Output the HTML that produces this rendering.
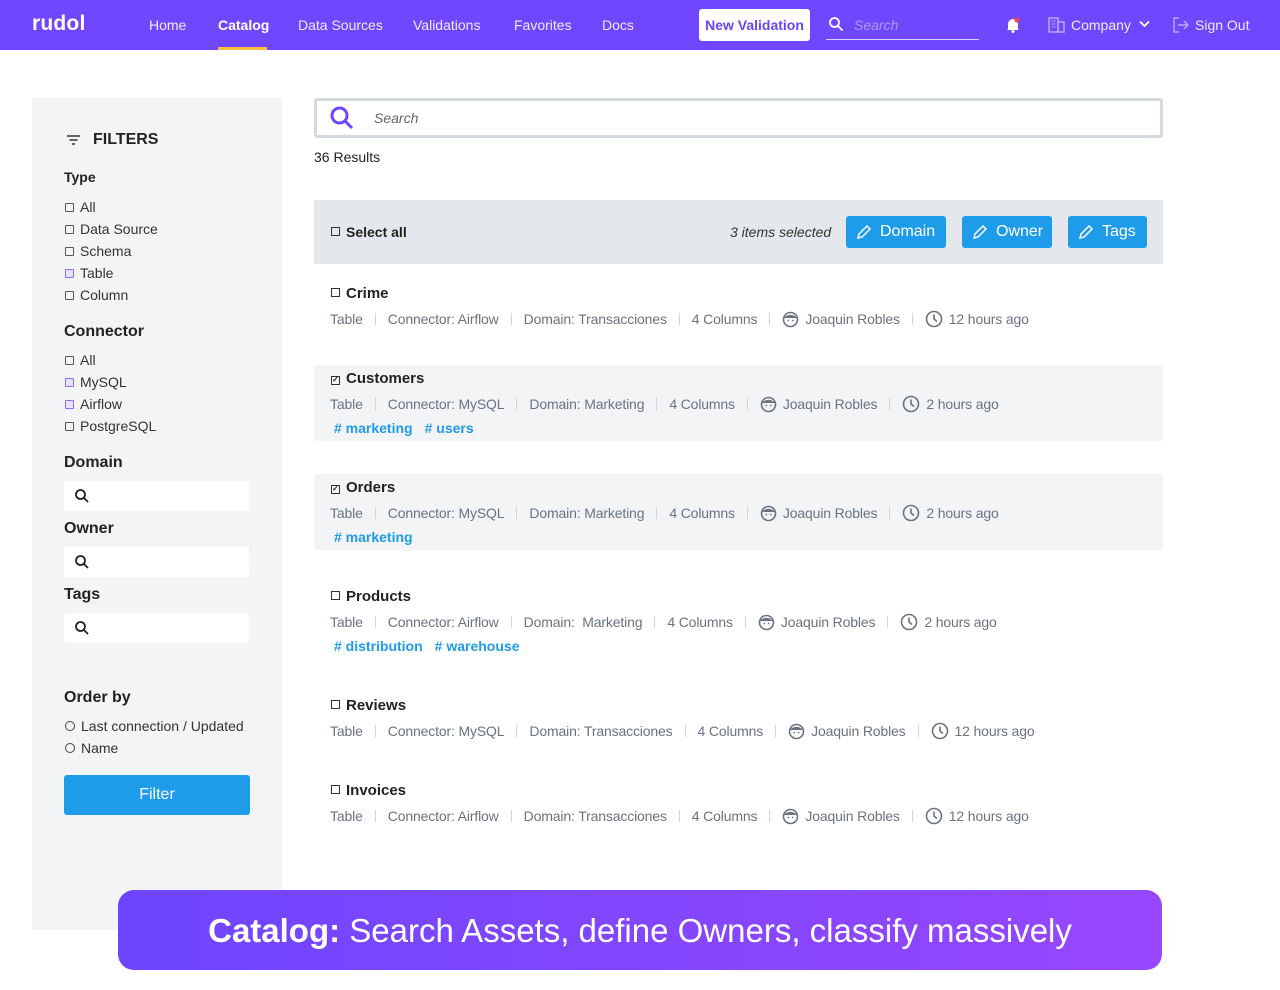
<!DOCTYPE html>
<html><head><meta charset="utf-8"><style>
*{margin:0;padding:0;box-sizing:border-box}
body{width:1280px;height:990px;position:relative;background:#fff;font-family:"Liberation Sans",sans-serif;color:#1f2328;overflow:hidden}
.nav{position:absolute;left:0;top:0;width:1280px;height:50px;background:#7047fe;color:#fff}
.nav span{position:absolute;top:17px;font-size:14px;color:#ecebff}
.a{position:absolute}
.side{position:absolute;left:32px;top:98px;width:250px;height:832px;background:#f3f4f6}
.h{position:absolute;font-weight:bold;font-size:15px;color:#222}
.cb{position:absolute;font-size:14px;color:#333;white-space:nowrap}
.cb i{display:inline-block;width:9px;height:9px;border:1.5px solid #555;border-radius:1px;margin-right:6px;vertical-align:0px}
.cb i.on{border-color:#8b6cf8;background:#e8e1ff;position:relative}
.cb b.r{display:inline-block;width:10px;height:10px;border:1.5px solid #444;border-radius:50%;margin-right:6px;vertical-align:0}
.inp{position:absolute;left:64px;width:185px;height:30px;background:#fff;border-radius:3px}
.inp svg{position:absolute;left:10px;top:7px}
.row{position:absolute;left:314px;width:849px;border-radius:3px}
.row.g{background:#f3f4f6}
.t{position:absolute;left:17px;font-weight:bold;font-size:15px;color:#222}
.t i{display:inline-block;width:9px;height:9px;border:1.5px solid #333;margin-right:6px;vertical-align:1px;font-style:normal}
.m{position:absolute;left:16px;font-size:14px;color:#6b7280;white-space:nowrap;display:flex;align-items:center;letter-spacing:-0.15px}
.m s{text-decoration:none;display:inline-block;width:1px;height:12px;background:#d1d5db;margin:0 12px}
.m svg{margin-right:6px}
.tg{position:absolute;left:20px;font-size:14px;font-weight:bold;color:#1e9be9}
.tg span{margin-right:12px}
.btn{position:absolute;top:216px;height:32px;background:#1e9be9;color:#fff;font-size:16px;border-radius:3px;display:flex;align-items:center;padding-left:10px}
.btn svg{margin-right:8px}
</style></head><body>
<div class="nav">
<div class="a" style="left:32px;top:12px;font-size:21px;font-weight:bold;color:#fff;letter-spacing:.2px">rudol</div>
<span style="left:149px">Home</span>
<span style="left:218px;font-weight:bold;color:#fff">Catalog</span>
<div class="a" style="left:218px;top:47px;width:49px;height:3px;background:#fbbf3c"></div>
<span style="left:298px">Data Sources</span>
<span style="left:413px">Validations</span>
<span style="left:514px">Favorites</span>
<span style="left:602px">Docs</span>
<div class="a" style="left:699px;top:9px;width:111px;height:32px;background:#fff;border-radius:3px;color:#6a45f0;font-weight:bold;font-size:14px;text-align:center;line-height:32px">New Validation</div>
<svg class="a" style="left:828px;top:16px" width="16" height="16" viewBox="0 0 16 16"><circle cx="6.5" cy="6.5" r="4.5" fill="none" stroke="#fff" stroke-width="1.8"/><path d="M10 10l4.5 4.5" stroke="#fff" stroke-width="1.8"/></svg>
<span style="left:854px;font-style:italic;color:#a99af0">Search</span>
<div class="a" style="left:826px;top:39px;width:153px;height:1px;background:#d8d2ff"></div>
<svg class="a" style="left:1004px;top:16px" width="18" height="18" viewBox="0 0 18 18"><path d="M4 13V8a5 5 0 0 1 10 0v5l1 1H3z" fill="#fff"/><circle cx="9" cy="15.5" r="1.5" fill="#fff"/><circle cx="13" cy="4" r="2.5" fill="#f04444"/></svg>
<svg class="a" style="left:1048px;top:17px" width="17" height="16" viewBox="0 0 17 16"><rect x="1" y="1" width="9" height="14" fill="none" stroke="#b7a9ff" stroke-width="1.5"/><rect x="10" y="5" width="6" height="10" fill="none" stroke="#b7a9ff" stroke-width="1.5"/><path d="M3.5 4h4M3.5 7h4M3.5 10h4" stroke="#b7a9ff"/></svg>
<span style="left:1071px">Company</span>
<svg class="a" style="left:1139px;top:20px" width="11" height="8" viewBox="0 0 11 8"><path d="M1 1.5l4.5 4.5 4.5-4.5" fill="none" stroke="#fff" stroke-width="1.8"/></svg>
<svg class="a" style="left:1172px;top:16px" width="18" height="18" viewBox="0 0 18 18"><path d="M7 2H2v14h5" fill="none" stroke="#b7a9ff" stroke-width="1.5"/><path d="M6 9h10M12 5l4 4-4 4" fill="none" stroke="#b7a9ff" stroke-width="1.5"/></svg>
<span style="left:1195px">Sign Out</span>
</div>

<div class="side"></div>
<svg class="a" style="left:66px;top:134px" width="15" height="12" viewBox="0 0 15 12"><path d="M1 2h13M3.5 6h8M6 10h3" stroke="#333" stroke-width="1.6"/></svg>
<div class="h" style="left:93px;top:131px;font-size:16px">FILTERS</div>
<div class="h" style="left:64px;top:169px;font-size:14px">Type</div>
<div class="cb" style="left:65px;top:199px"><i></i>All</div>
<div class="cb" style="left:65px;top:221px"><i></i>Data Source</div>
<div class="cb" style="left:65px;top:243px"><i></i>Schema</div>
<div class="cb" style="left:65px;top:265px"><i class="on"></i>Table</div>
<div class="cb" style="left:65px;top:287px"><i></i>Column</div>
<div class="h" style="left:64px;top:323px;font-size:16px">Connector</div>
<div class="cb" style="left:65px;top:352px"><i></i>All</div>
<div class="cb" style="left:65px;top:374px"><i class="on"></i>MySQL</div>
<div class="cb" style="left:65px;top:396px"><i class="on"></i>Airflow</div>
<div class="cb" style="left:65px;top:418px"><i></i>PostgreSQL</div>
<div class="h" style="left:64px;top:454px;font-size:16px">Domain</div>
<div class="inp" style="top:481px"><svg width="16" height="16" viewBox="0 0 16 16"><circle cx="6.5" cy="6.5" r="4.5" fill="none" stroke="#222" stroke-width="1.8"/><path d="M10 10l4 4" stroke="#222" stroke-width="1.8"/></svg></div>
<div class="h" style="left:64px;top:520px;font-size:16px">Owner</div>
<div class="inp" style="top:547px"><svg width="16" height="16" viewBox="0 0 16 16"><circle cx="6.5" cy="6.5" r="4.5" fill="none" stroke="#222" stroke-width="1.8"/><path d="M10 10l4 4" stroke="#222" stroke-width="1.8"/></svg></div>
<div class="h" style="left:64px;top:586px;font-size:16px">Tags</div>
<div class="inp" style="top:613px"><svg width="16" height="16" viewBox="0 0 16 16"><circle cx="6.5" cy="6.5" r="4.5" fill="none" stroke="#222" stroke-width="1.8"/><path d="M10 10l4 4" stroke="#222" stroke-width="1.8"/></svg></div>
<div class="h" style="left:64px;top:689px;font-size:16px">Order by</div>
<div class="cb" style="left:65px;top:718px"><b class="r"></b>Last connection / Updated</div>
<div class="cb" style="left:65px;top:740px"><b class="r"></b>Name</div>
<div class="a" style="left:64px;top:775px;width:186px;height:40px;background:#1e9be9;border-radius:3px;color:#fff;font-size:16px;text-align:center;line-height:40px">Filter</div>

<div class="a" style="left:314px;top:98px;width:849px;height:40px;border:3px solid #d5d9e0;border-radius:3px"></div>
<svg class="a" style="left:329px;top:105px" width="26" height="26" viewBox="0 0 26 26"><circle cx="10.5" cy="10.5" r="7.5" fill="none" stroke="#7047fe" stroke-width="3"/><path d="M16 16l7 7" stroke="#7047fe" stroke-width="3"/></svg>
<div class="a" style="left:374px;top:110px;font-size:14px;font-style:italic;color:#666">Search</div>
<div class="a" style="left:314px;top:149px;font-size:14px;color:#222">36 Results</div>

<div class="a" style="left:314px;top:200px;width:849px;height:64px;background:#e4e7eb"></div>
<div class="t" style="left:331px;top:224px;font-size:14px"><i></i>Select all</div>
<div class="a" style="left:730px;top:224px;font-size:14px;font-style:italic;color:#333">3 items selected</div>
<div class="btn" style="left:846px;width:100px"><svg width="16" height="16" viewBox="0 0 16 16"><path d="M2 14l1-4 8-8 3 3-8 8z" fill="none" stroke="#fff" stroke-width="1.5"/></svg>Domain</div>
<div class="btn" style="left:962px;width:90px"><svg width="16" height="16" viewBox="0 0 16 16"><path d="M2 14l1-4 8-8 3 3-8 8z" fill="none" stroke="#fff" stroke-width="1.5"/></svg>Owner</div>
<div class="btn" style="left:1068px;width:79px"><svg width="16" height="16" viewBox="0 0 16 16"><path d="M2 14l1-4 8-8 3 3-8 8z" fill="none" stroke="#fff" stroke-width="1.5"/></svg>Tags</div>

<div class="row" style="top:280px;height:60px">
<div class="t" style="top:5px"><i></i>Crime</div>
<div class="m" style="top:30px">Table<s></s>Connector: Airflow<s></s>Domain: Transacciones<s></s>4 Columns<s></s><svg width="17" height="17" viewBox="0 0 17 17"><circle cx="8.5" cy="8.5" r="7" fill="none" stroke="#6b7280" stroke-width="1.6"/><path d="M2.5 7c3-3 8-4 12 0" fill="#6b7280" stroke="#6b7280"/><circle cx="6.3" cy="9.5" r=".9" fill="#6b7280"/><circle cx="10.7" cy="9.5" r=".9" fill="#6b7280"/></svg>Joaquin Robles<s></s><svg width="18" height="18" viewBox="0 0 18 18"><circle cx="9" cy="9" r="7.5" fill="none" stroke="#6b7280" stroke-width="1.6"/><path d="M9 4.5V9l3 2.5" fill="none" stroke="#6b7280" stroke-width="1.6"/></svg>12 hours ago</div>
</div>
<div class="row g" style="top:365px;height:76px">
<div class="t" style="top:5px"><i style="font-size:8px;line-height:6px;text-align:center">✓</i>Customers</div>
<div class="m" style="top:30px">Table<s></s>Connector: MySQL<s></s>Domain: Marketing<s></s>4 Columns<s></s><svg width="17" height="17" viewBox="0 0 17 17"><circle cx="8.5" cy="8.5" r="7" fill="none" stroke="#6b7280" stroke-width="1.6"/><path d="M2.5 7c3-3 8-4 12 0" fill="#6b7280" stroke="#6b7280"/><circle cx="6.3" cy="9.5" r=".9" fill="#6b7280"/><circle cx="10.7" cy="9.5" r=".9" fill="#6b7280"/></svg>Joaquin Robles<s></s><svg width="18" height="18" viewBox="0 0 18 18"><circle cx="9" cy="9" r="7.5" fill="none" stroke="#6b7280" stroke-width="1.6"/><path d="M9 4.5V9l3 2.5" fill="none" stroke="#6b7280" stroke-width="1.6"/></svg>2 hours ago</div>
<div class="tg" style="top:55px"><span># marketing</span><span># users</span></div>
</div>
<div class="row g" style="top:474px;height:76px">
<div class="t" style="top:5px"><i style="font-size:8px;line-height:6px;text-align:center">✓</i>Orders</div>
<div class="m" style="top:30px">Table<s></s>Connector: MySQL<s></s>Domain: Marketing<s></s>4 Columns<s></s><svg width="17" height="17" viewBox="0 0 17 17"><circle cx="8.5" cy="8.5" r="7" fill="none" stroke="#6b7280" stroke-width="1.6"/><path d="M2.5 7c3-3 8-4 12 0" fill="#6b7280" stroke="#6b7280"/><circle cx="6.3" cy="9.5" r=".9" fill="#6b7280"/><circle cx="10.7" cy="9.5" r=".9" fill="#6b7280"/></svg>Joaquin Robles<s></s><svg width="18" height="18" viewBox="0 0 18 18"><circle cx="9" cy="9" r="7.5" fill="none" stroke="#6b7280" stroke-width="1.6"/><path d="M9 4.5V9l3 2.5" fill="none" stroke="#6b7280" stroke-width="1.6"/></svg>2 hours ago</div>
<div class="tg" style="top:55px"><span># marketing</span></div>
</div>
<div class="row" style="top:583px;height:76px">
<div class="t" style="top:5px"><i></i>Products</div>
<div class="m" style="top:30px">Table<s></s>Connector: Airflow<s></s>Domain:&nbsp; Marketing<s></s>4 Columns<s></s><svg width="17" height="17" viewBox="0 0 17 17"><circle cx="8.5" cy="8.5" r="7" fill="none" stroke="#6b7280" stroke-width="1.6"/><path d="M2.5 7c3-3 8-4 12 0" fill="#6b7280" stroke="#6b7280"/><circle cx="6.3" cy="9.5" r=".9" fill="#6b7280"/><circle cx="10.7" cy="9.5" r=".9" fill="#6b7280"/></svg>Joaquin Robles<s></s><svg width="18" height="18" viewBox="0 0 18 18"><circle cx="9" cy="9" r="7.5" fill="none" stroke="#6b7280" stroke-width="1.6"/><path d="M9 4.5V9l3 2.5" fill="none" stroke="#6b7280" stroke-width="1.6"/></svg>2 hours ago</div>
<div class="tg" style="top:55px"><span># distribution</span><span># warehouse</span></div>
</div>
<div class="row" style="top:692px;height:60px">
<div class="t" style="top:5px"><i></i>Reviews</div>
<div class="m" style="top:30px">Table<s></s>Connector: MySQL<s></s>Domain: Transacciones<s></s>4 Columns<s></s><svg width="17" height="17" viewBox="0 0 17 17"><circle cx="8.5" cy="8.5" r="7" fill="none" stroke="#6b7280" stroke-width="1.6"/><path d="M2.5 7c3-3 8-4 12 0" fill="#6b7280" stroke="#6b7280"/><circle cx="6.3" cy="9.5" r=".9" fill="#6b7280"/><circle cx="10.7" cy="9.5" r=".9" fill="#6b7280"/></svg>Joaquin Robles<s></s><svg width="18" height="18" viewBox="0 0 18 18"><circle cx="9" cy="9" r="7.5" fill="none" stroke="#6b7280" stroke-width="1.6"/><path d="M9 4.5V9l3 2.5" fill="none" stroke="#6b7280" stroke-width="1.6"/></svg>12 hours ago</div>
</div>
<div class="row" style="top:777px;height:60px">
<div class="t" style="top:5px"><i></i>Invoices</div>
<div class="m" style="top:30px">Table<s></s>Connector: Airflow<s></s>Domain: Transacciones<s></s>4 Columns<s></s><svg width="17" height="17" viewBox="0 0 17 17"><circle cx="8.5" cy="8.5" r="7" fill="none" stroke="#6b7280" stroke-width="1.6"/><path d="M2.5 7c3-3 8-4 12 0" fill="#6b7280" stroke="#6b7280"/><circle cx="6.3" cy="9.5" r=".9" fill="#6b7280"/><circle cx="10.7" cy="9.5" r=".9" fill="#6b7280"/></svg>Joaquin Robles<s></s><svg width="18" height="18" viewBox="0 0 18 18"><circle cx="9" cy="9" r="7.5" fill="none" stroke="#6b7280" stroke-width="1.6"/><path d="M9 4.5V9l3 2.5" fill="none" stroke="#6b7280" stroke-width="1.6"/></svg>12 hours ago</div>
</div>

<div class="a" style="left:118px;top:890px;width:1044px;height:80px;border-radius:16px;background:linear-gradient(90deg,#6e45fe,#9747ff);color:#fff;font-size:33px;text-align:center;line-height:82px;letter-spacing:0"><b>Catalog:</b> Search Assets, define Owners, classify massively</div>
</body></html>
